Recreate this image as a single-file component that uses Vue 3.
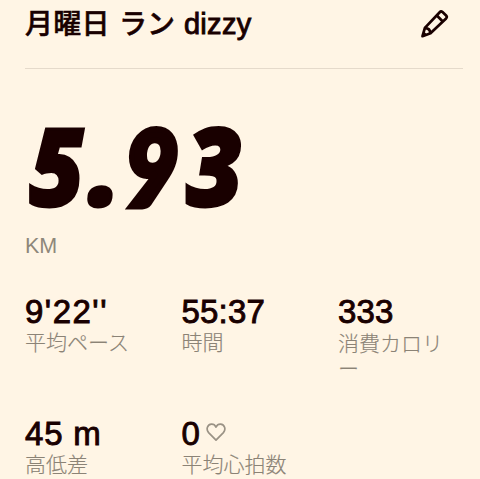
<script setup>
const stats = [
  { value: "9'22''", label: '平均ペース', spaced: true },
  { value: '55:37', label: '時間' },
  { value: '333', label: '消費カロリー', lower: true },
  { value: '45 m', label: '高低差', wide: true },
  { value: '0', label: '平均心拍数', heart: true },
]
</script>

<template>
  <main class="run">
    <header class="header">
      <h1 class="title"><span class="jp">月曜日</span><span class="jp kana">ラン</span><span class="latin">dizzy</span></h1>
      <svg class="pencil" viewBox="0 0 32 32" fill="none" stroke="currentColor" stroke-width="2.7" stroke-linejoin="round">
        <path d="M3.5 28.2 L5.9 19.9 L20.7 4.2 Q22 2.8 23.5 4.1 L27.1 7.5 Q28.5 8.9 27.1 10.4 L11.5 25.3 Z" />
        <path d="M17.6 7.3 L24 13.7 M5.8 20.2 Q11 20 11.3 25.2" />
        <path d="M3.5 28.5 L5 23.5 L8.5 27 Z" fill="currentColor" stroke="none" />
      </svg>
    </header>
    <section class="distance">
      <div class="number"><span class="five">5</span><span class="dot">.</span><span class="nine">9</span><span class="three">3</span></div>
      <div class="unit">KM</div>
    </section>
    <section class="stats">
      <div v-for="s in stats" :key="s.label" class="stat">
        <div class="value" :class="{ spaced: s.spaced, wide: s.wide }">
          <span>{{ s.value }}</span>
          <svg v-if="s.heart" class="heart" viewBox="0 0 20 19" fill="none" stroke="currentColor" stroke-width="1.7" stroke-linejoin="round">
            <path d="M10 17.2 L2.6 9.6 C-.2 6.3 1.3 1.3 5.5 1.1 C7.5 1 9 2 10 4 C11 2 12.5 1 14.5 1.1 C18.7 1.3 20.2 6.3 17.4 9.6 Z" />
          </svg>
        </div>
        <div class="label" :class="{ lower: s.lower }">{{ s.label }}</div>
      </div>
    </section>
  </main>
</template>

<style>
body { background: #fff5e5; }
</style>

<style scoped>
.run {
  box-sizing: border-box;
  width: 480px;
  height: 479px;
  overflow: hidden;
  padding: 0 17px 0 25px;
  background: #fff5e5;
  color: #190000;
  font-family: "Liberation Sans", "Noto Sans CJK JP", sans-serif;
}
.header {
  box-sizing: border-box;
  height: 69px;
  display: flex;
  align-items: flex-start;
  justify-content: space-between;
  border-bottom: 1px solid #e5dacb;
}
.title {
  margin: 0;
  display: flex;
  align-items: baseline;
  line-height: 45px;
  font-size: 28px;
  font-weight: 400;
  white-space: nowrap;
}
.jp { font-family: "Noto Sans CJK JP", sans-serif; font-weight: 500; -webkit-text-stroke: 0.5px currentColor; }
.jp:first-child { letter-spacing: 0.3px; }
.kana { margin-left: 9px; }
.latin { margin-left: 9px; font-size: 29px; letter-spacing: 0.3px; -webkit-text-stroke: 0.9px currentColor; }
.pencil { width: 32px; height: 32px; margin: 8px 12px 0 0; }
.distance { height: 219px; }
.number {
  display: flex;
  align-items: baseline;
  height: 165px;
  line-height: 191px;
  box-sizing: border-box;
  font-family: "Open Sans", sans-serif;
  font-size: 108px;
  font-weight: 800;
  font-style: italic;
  -webkit-text-stroke: 3px currentColor;
}
.number span { display: block; }
.number .five { transform: translateX(0.5px) scaleX(0.87); }
.number .dot { margin-left: 1px; }
.number .nine { font-family: Lato, sans-serif; font-size: 104px; font-weight: 900; -webkit-text-stroke-width: 6px; transform: translateX(-0.5px) scaleX(0.9); }
.number .three { margin-left: 1px; transform: scaleX(0.9); }
.unit { font-size: 21.5px; line-height: 25px; color: #8e877a; }
.stats {
  display: grid;
  grid-template-columns: 156.5px 156.5px 110px;
  grid-template-rows: 122px 80px;
}
.value {
  display: flex;
  align-items: center;
  height: 41px;
  padding-top: 7px;
  box-sizing: border-box;
  font-size: 33px;
  letter-spacing: 0.2px;
  line-height: 34px;
  white-space: nowrap;
  -webkit-text-stroke: 0.9px currentColor;
}
.value.spaced { letter-spacing: 1.5px; }
.value.wide { letter-spacing: 0.8px; }
.heart { width: 20px; height: 19px; margin: -3px 0 0 6px; color: #9a9285; }
.label {
  font-family: "Noto Sans CJK JP", sans-serif;
  font-size: 21px;
  font-weight: 300;
  line-height: 25px;
  color: #8b8376;
  -webkit-text-stroke: 0.15px currentColor;
}
.label.lower { padding-top: 1px; }
</style>
